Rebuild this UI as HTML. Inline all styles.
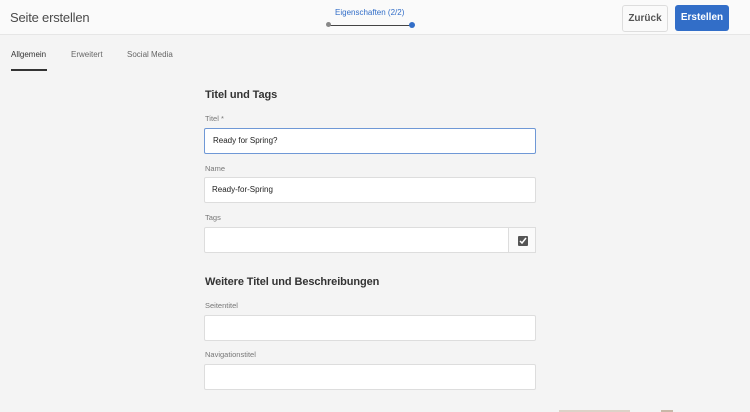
<!DOCTYPE html>
<html><head><style>
*{box-sizing:border-box;margin:0;padding:0}
body{width:750px;height:412px;overflow:hidden;background:#f4f4f4;font-family:"Liberation Sans",sans-serif;position:relative}
.hdr{position:absolute;left:0;top:0;width:750px;height:35px;background:#fafafa;border-bottom:1px solid #e6e6e6}
.t{position:absolute;left:10px;top:10px;font-size:13px;color:#4b4b4b;letter-spacing:-0.2px}
.step{position:absolute;left:335px;top:8px;font-size:8px;color:#326ec8}
.line{position:absolute;left:330px;top:24.5px;width:83px;height:1px;background:#444}
.d1{position:absolute;left:326px;top:22px;width:5px;height:5px;border-radius:50%;background:#888}
.d2{position:absolute;left:409px;top:22px;width:6px;height:6px;border-radius:50%;background:#326ec8}
.b1{position:absolute;left:622px;top:5px;width:46px;height:27px;border:1px solid #ddd;border-radius:3px;background:#fafafa;font-size:10px;font-weight:bold;color:#555;text-align:center;line-height:25px}
.b2{position:absolute;left:675px;top:5px;width:54px;height:26px;border-radius:3px;background:#326ec8;font-size:10px;font-weight:bold;color:#fff;text-align:center;line-height:26px}
.tab{position:absolute;top:50px;font-size:8px;color:#666}
.ul{position:absolute;left:11px;top:69px;width:36px;height:2px;background:#333}
h2{position:absolute;left:205px;font-size:11px;font-weight:bold;color:#333;letter-spacing:-0.1px}
.lb{position:absolute;left:205px;font-size:7.5px;color:#777}
.in{position:absolute;left:204px;width:332px;height:26px;background:#fff;border:1px solid #ddd;border-radius:2px;font-size:8px;color:#222;padding-left:7px;line-height:24px}
.cb{position:absolute;left:508px;top:227px;width:28px;height:26px;border:1px solid #ddd;background:#fafafa}
.cb i{position:absolute;left:9px;top:8px;width:10px;height:10px;background:#555;border-radius:1px}
</style></head><body>
<div class="hdr"><div class="t">Seite erstellen</div><div class="step">Eigenschaften (2/2)</div>
<div class="line"></div><div class="d1"></div><div class="d2"></div>
<div class="b1">Zurück</div><div class="b2">Erstellen</div></div>
<div class="tab" style="left:11px;color:#333">Allgemein</div>
<div class="tab" style="left:71px">Erweitert</div>
<div class="tab" style="left:127px">Social Media</div>
<div class="ul"></div>
<h2 style="top:89px">Titel und Tags</h2>
<div class="lb" style="top:114px">Titel *</div>
<div class="in" style="top:128px;border:1px solid #6f98d6;padding-left:8px">Ready for Spring?</div>
<div class="lb" style="top:164px">Name</div>
<div class="in" style="top:177px">Ready-for-Spring</div>
<div class="lb" style="top:213px">Tags</div>
<div class="in" style="top:227px"></div>
<div class="cb"><i></i><svg style="position:absolute;left:10px;top:9px" width="8" height="8"><path d="M1 4l2 2 4-5" stroke="#fff" stroke-width="1.5" fill="none"/></svg></div>
<h2 style="top:276px">Weitere Titel und Beschreibungen</h2>
<div class="lb" style="top:301px">Seitentitel</div>
<div class="in" style="top:315px"></div>
<div class="lb" style="top:350px">Navigationstitel</div>
<div class="in" style="top:364px"></div>
<div style="position:absolute;left:559px;top:410px;width:71px;height:2px;background:#ddd2c8"></div>
<div style="position:absolute;left:661px;top:410px;width:12px;height:2px;background:#c8b8a8"></div>
</body></html>
